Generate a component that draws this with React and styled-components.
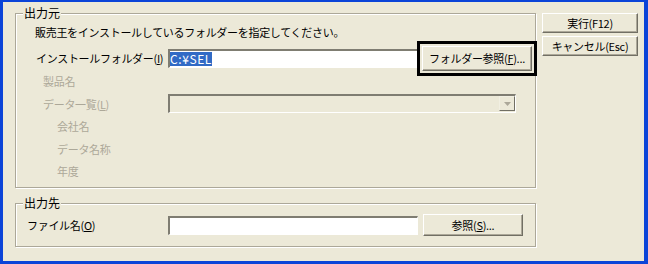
import React from 'react';
import styled, { createGlobalStyle } from 'styled-components';

const GlobalStyle = createGlobalStyle`
html, body {
  margin:0;
  padding:0;
  background:#ECE9D8;
}
body {
  font-family:"Noto Sans CJK JP", "Liberation Sans", sans-serif;
  font-size:11px;
  letter-spacing:-0.3px;
  line-height:14px;
  color:#000;
}
`

export default function App() {
    return (
        <React.Fragment>
            <GlobalStyle />
            <Window>
                <LeftColumn>
                    <Group h={175}>
                        <GroupTitle>出力元</GroupTitle>
                        <GroupBody top={11}>
                            <Row h={14} mb={7}>
                                <Label pl={19} auto>販売王をインストールしているフォルダーを指定してください。</Label>
                            </Row>
                            <Row h={24}>
                                <Label pl={20}>インストールフォルダー(<Accel>I</Accel>)</Label>
                                <TextBox w={250}><Selected>C:¥SEL</Selected></TextBox>
                                <Button w={110} h={25} ml={4} focused>フォルダー参照(<Accel>F</Accel>)...</Button>
                            </Row>
                            <Row h={22.5}>
                                <Label pl={27} disabled>製品名</Label>
                            </Row>
                            <Row h={22.5}>
                                <Label pl={27} disabled>データ一覧(<Accel>L</Accel>)</Label>
                                <Combo>
                                    <ComboArrow>
                                        <svg width="7" height="4" viewBox="0 0 7 4">
                                            <path d="M0 0h7L3.5 4z" fill="#ACA899" />
                                        </svg>
                                    </ComboArrow>
                                </Combo>
                            </Row>
                            <Row h={22.5}>
                                <Label pl={41} disabled>会社名</Label>
                            </Row>
                            <Row h={22.5}>
                                <Label pl={41} disabled>データ名称</Label>
                            </Row>
                            <Row h={22.5}>
                                <Label pl={41} disabled>年度</Label>
                            </Row>
                        </GroupBody>
                    </Group>
                    <Group h={44}>
                        <GroupTitle>出力先</GroupTitle>
                        <GroupBody top={10}>
                            <Row h={22}>
                                <Label pl={11}>ファイル名(<Accel>O</Accel>)</Label>
                                <TextBox w={250} />
                                <Button w={100} h={22} ml={5}>参照(<Accel>S</Accel>)...</Button>
                            </Row>
                        </GroupBody>
                    </Group>
                </LeftColumn>
                <RightColumn>
                    <Button w={96} h={20}>実行(F12)</Button>
                    <Button w={96} h={20}>キャンセル(Esc)</Button>
                </RightColumn>
            </Window>
        </React.Fragment>
    )
}

const Window = styled.div `
width:648px;
height:264px;
box-sizing:border-box;
background:#ECE9D8;
border-style:solid;
border-color:#0B44D8;
border-width:2px 4px 3px 3px;
padding:11px 6px 0 12px;
display:flex;
gap:6px;
`
const LeftColumn = styled.div `
width:521px;
display:flex;
flex-direction:column;
gap:15px;
`
const RightColumn = styled.div `
width:96px;
display:flex;
flex-direction:column;
gap:3px;
`
const Group = styled.div `
position:relative;
box-sizing:border-box;
height:${p => p.h}px;
border:1px solid #ACA899;
box-shadow:1px 1px 0 #fff, inset 1px 1px 0 #fff;
`
const GroupTitle = styled.div `
position:absolute;
left:7px;
top:-8px;
padding:0 1px;
background:#ECE9D8;
font-size:12px;
letter-spacing:0;
line-height:14px;
`
const GroupBody = styled.div `
padding-top:${p => p.top}px;
display:flex;
flex-direction:column;
`
const Row = styled.div `
height:${p => p.h}px;
margin-bottom:${p => p.mb || 0}px;
display:flex;
align-items:center;
`
const Label = styled.div `
box-sizing:border-box;
width:${p => p.auto ? 'auto' : '152px'};
flex-shrink:0;
padding-left:${p => p.pl}px;
white-space:nowrap;
color:${p => p.disabled ? '#ACA899' : '#000'};
`
const Accel = styled.span `
text-decoration:underline;
`
const TextBox = styled.div `
box-sizing:border-box;
width:${p => p.w}px;
height:19px;
background:#fff;
border-style:solid;
border-width:2px 1px 1px 2px;
border-color:#7F7D72 #fff #fff #7F7D72;
display:flex;
align-items:center;
`
const Selected = styled.span `
background:#316AC5;
color:#fff;
font-size:12px;
letter-spacing:0.6px;
line-height:14px;
`
const Combo = styled.div `
box-sizing:border-box;
width:348px;
height:19px;
background:#ECE9D8;
border-style:solid;
border-width:2px 1px 1px 2px;
border-color:#7F7D72 #fff #fff #7F7D72;
display:flex;
justify-content:flex-end;
`
const ComboArrow = styled.div `
box-sizing:border-box;
width:16px;
height:15px;
background:#ECE9D8;
border:1px solid;
border-color:#F1EFE2 #716F64 #716F64 #F1EFE2;
display:flex;
align-items:center;
justify-content:center;
`
const Button = styled.div `
box-sizing:border-box;
width:${p => p.w}px;
height:${p => p.h}px;
margin-left:${p => p.ml || 0}px;
flex-shrink:0;
background:#ECE9D8;
border:1px solid;
border-color:#fff #716F64 #716F64 #fff;
box-shadow:inset -1px -1px 0 #ACA899;
display:flex;
align-items:center;
justify-content:center;
white-space:nowrap;
outline:${p => p.focused ? '3px solid #000' : 'none'};
outline-offset:2px;
`
